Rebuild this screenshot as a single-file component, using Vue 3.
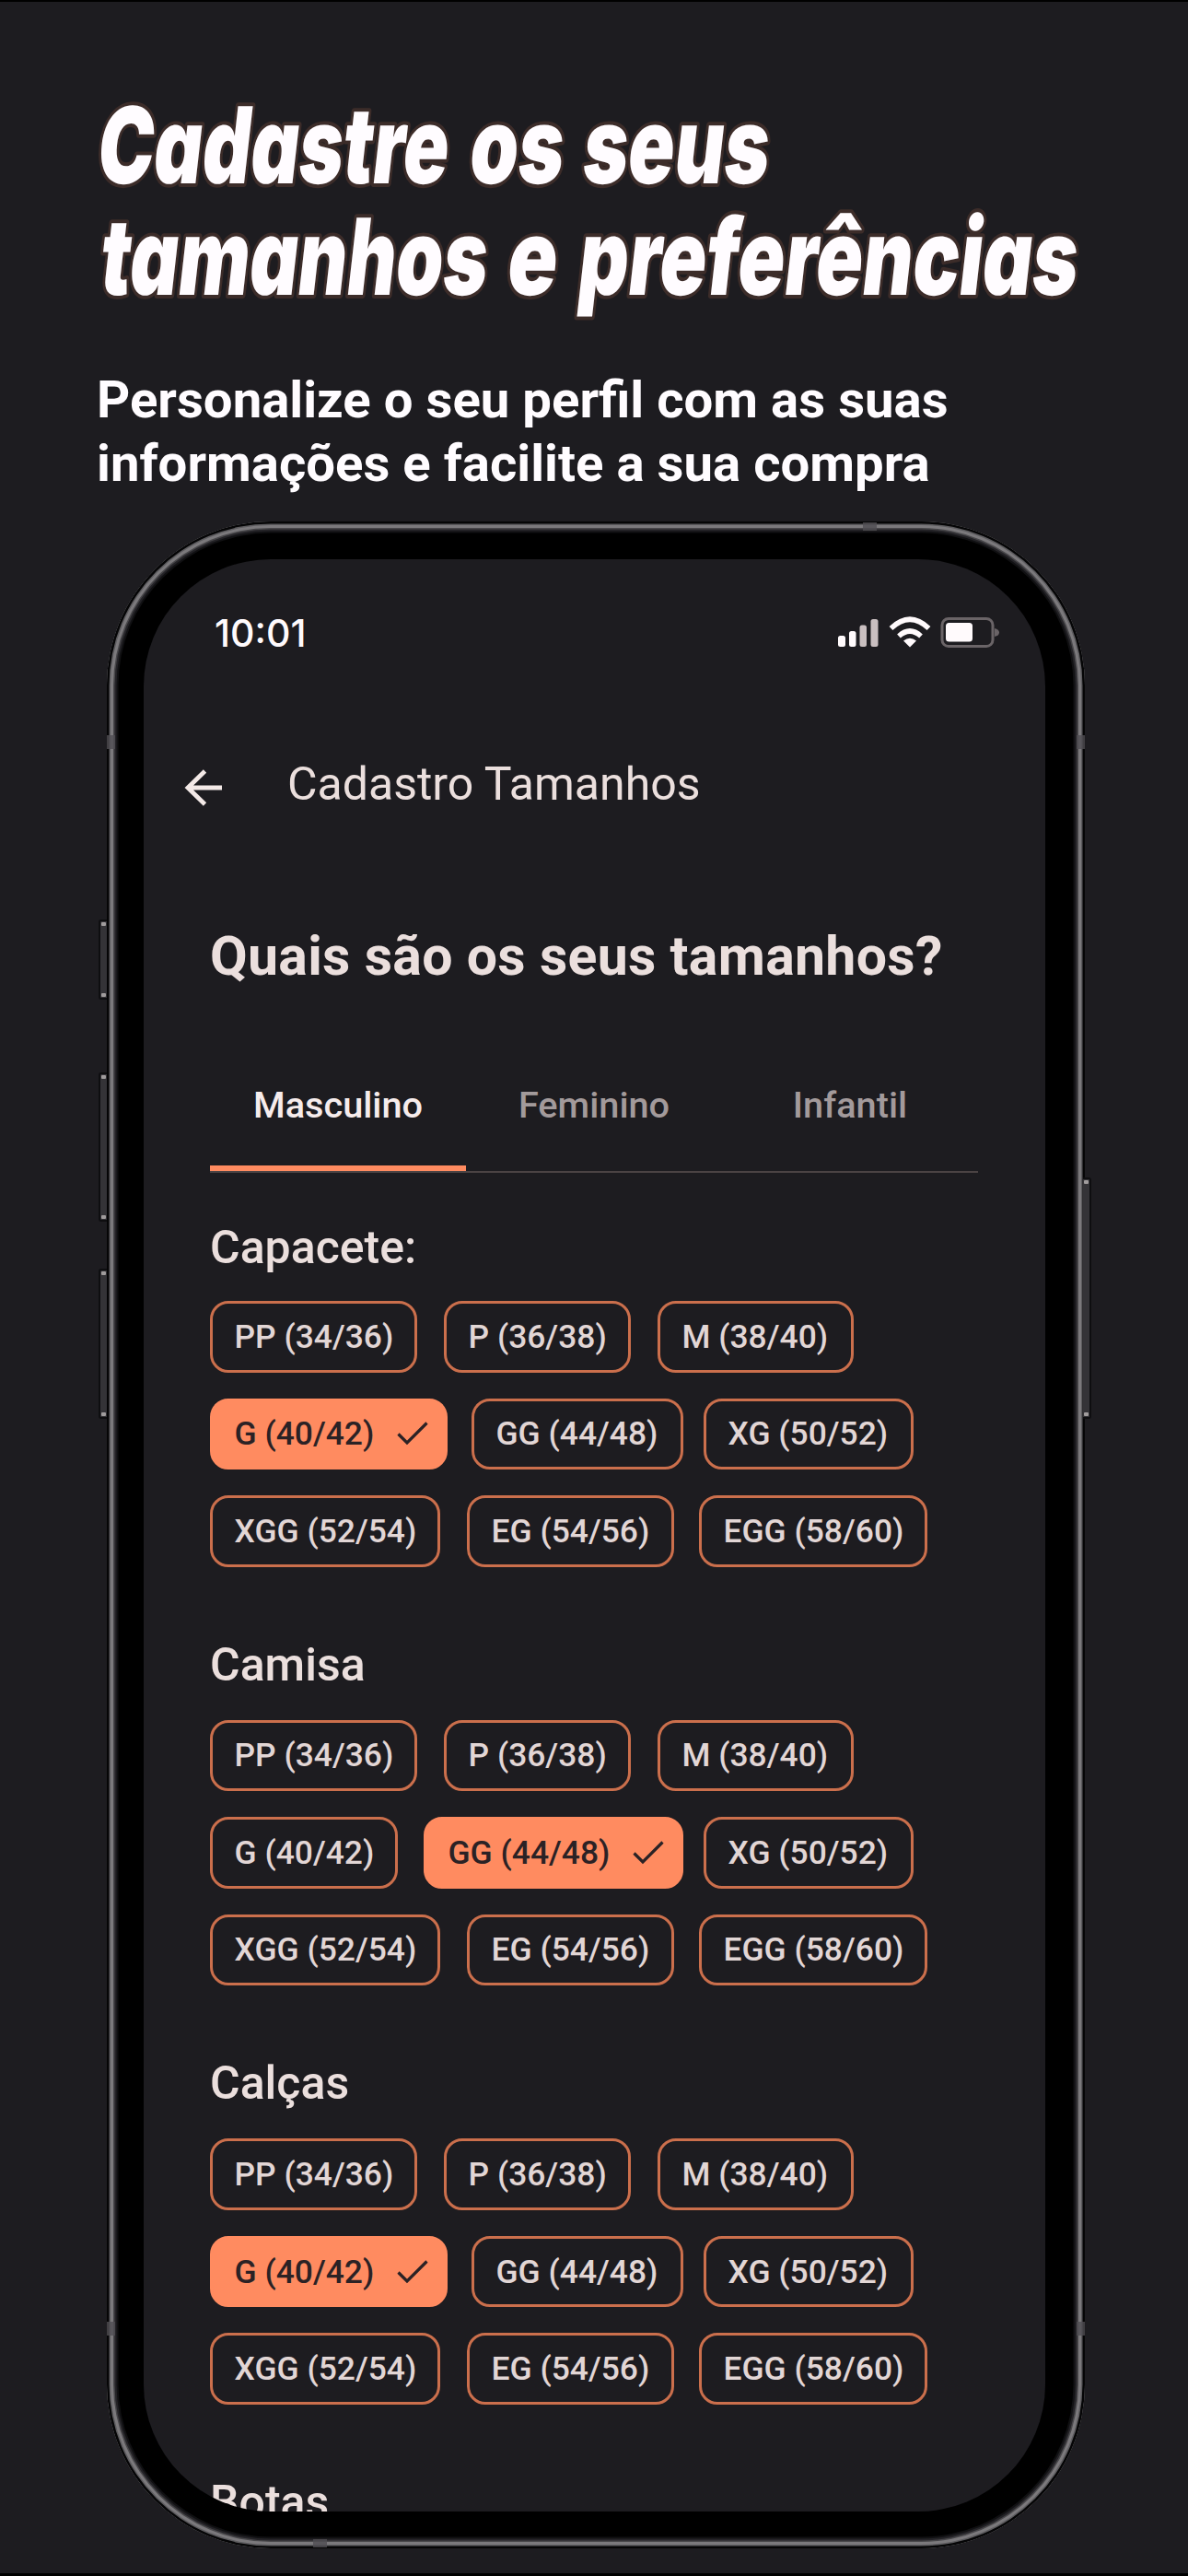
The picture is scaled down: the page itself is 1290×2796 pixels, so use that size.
<template>
  <div class="page">
    <svg class="headline" width="1290" height="380" viewBox="0 0 1290 380">
      <text v-for="t in headline" :key="t.text" :x="t.x" :y="t.y" :textLength="t.len" lengthAdjust="spacingAndGlyphs" :transform="skew(t)">{{ t.text }}</text>
    </svg>
    <p class="sub">Personalize o seu perfil com as suas<br>informações e facilite a sua compra</p>

    <div class="phone">
      <i v-for="k in keys" :key="k" class="key" :class="k"></i>
      <i v-for="n in 6" :key="n" class="seam" :class="'seam' + n"></i>
      <div class="screen">
        <div class="status">
          <span class="time">10:01</span>
          <svg class="status-icons" width="178" height="36" viewBox="0 0 178 36">
            <g fill="#fffafc">
              <rect x="1" y="21" width="8" height="12" rx="2.5" />
              <rect x="13" y="16" width="7.5" height="17" rx="2.5" />
            </g>
            <g fill="#c9bfc0">
              <rect x="24.5" y="9.500" width="7.5" height="23.500" rx="2.5" />
              <rect x="36.5" y="3" width="8" height="30" rx="2.5" />
            </g>
            <g fill="none" stroke="#fffafc" stroke-width="5.500">
              <path d="M58.5 13 Q79 -6.500 99.500 13" />
              <path d="M67 21.500 Q79 10.500 91 21.500" />
            </g>
            <path d="M72 26.500 Q79 21 86 26.500 L79 33.500Z" fill="#fffafc" />
            <rect x="114" y="2.500" width="55" height="30" rx="7" fill="none" stroke="#6a6467" stroke-width="3" />
            <path d="M171 13 Q176 14 176 17.500 Q176 21 171 22Z" fill="#6a6467" />
            <rect x="118" y="7" width="29" height="20.500" rx="3.500" fill="#fffafc" />
          </svg>
        </div>

        <div class="appbar">
          <svg width="44" height="44" viewBox="0 0 44 44" fill="none" stroke="#f3e9e7" stroke-width="4.800">
            <path d="M42 22H5M23.500 4 5 22l18.500 18" />
          </svg>
          <span>Cadastro Tamanhos</span>
        </div>

        <h1>Quais são os seus tamanhos?</h1>

        <div class="tabs">
          <button v-for="(t, i) in tabs" :key="t" :class="{ active: i === tab }" @click="tab = i">{{ t }}</button>
        </div>

        <section v-for="g in groups" :key="g.title">
          <h2>{{ g.title }}</h2>
          <div v-for="(row, r) in rows" :key="r" class="row">
            <button
              v-for="s in row"
              :key="s.label"
              class="chip"
              :class="{ on: g.selected === s.label }"
              :style="chipStyle(s, row, g.selected)"
              @click="g.selected = s.label"
            >
              {{ s.label }}
              <svg v-if="g.selected === s.label" width="34" height="26" viewBox="0 0 34 26" fill="none" stroke="#2b2225" stroke-width="3.200">
                <path d="M1.500 13.500 11 23 32.500 1.500" />
              </svg>
            </button>
          </div>
        </section>
        <h2>Botas</h2>
      </div>
    </div>
  </div>
</template>

<script setup>
import { ref, reactive } from 'vue'

const headline = [
  { text: 'Cadastre', x: 103, y: 199, len: 381 },
  { text: 'os', x: 507, y: 199, len: 102 },
  { text: 'seus', x: 630, y: 199, len: 202 },
  { text: 'tamanhos', x: 106, y: 320, len: 420 },
  { text: 'e', x: 548, y: 320, len: 54 },
  { text: 'preferências', x: 625, y: 320, len: 542 },
]
// lean the upright letters around their own baseline
const skew = t => `translate(${t.y * Math.tan(6.5 * Math.PI / 180)} 0) skewX(-6.5)`

const keys = ['mute', 'up', 'down', 'power']

const tabs = ['Masculino', 'Feminino', 'Infantil']
const tab = ref(0)

// x / end: edges of a chip inside its row, xOn / endOn: the same once it is selected
const rows = [
  [{ label: 'PP (34/36)', x: 0, end: 225 }, { label: 'P (36/38)', x: 254, end: 457 }, { label: 'M (38/40)', x: 486, end: 699 }],
  [{ label: 'G (40/42)', x: 0, end: 204, endOn: 258 }, { label: 'GG (44/48)', x: 284, xOn: 232, end: 514 }, { label: 'XG (50/52)', x: 536, end: 764 }],
  [{ label: 'XGG (52/54)', x: 0, end: 250 }, { label: 'EG (54/56)', x: 279, end: 504 }, { label: 'EGG (58/60)', x: 531, end: 779 }],
]
const edges = (s, on) => ({
  from: on && s.xOn !== undefined ? s.xOn : s.x,
  to: on && s.endOn ? s.endOn : s.end,
})
function chipStyle(s, row, selected) {
  const i = row.indexOf(s)
  const e = edges(s, s.label === selected)
  const prev = i ? edges(row[i - 1], row[i - 1].label === selected).to : 0
  return { width: e.to - e.from + 'px', marginLeft: e.from - prev + 'px' }
}

const groups = reactive([
  { title: 'Capacete:', selected: 'G (40/42)' },
  { title: 'Camisa', selected: 'GG (44/48)' },
  { title: 'Calças', selected: 'G (40/42)' },
])
</script>

<style>
html, body { margin: 0; background: #1d1c20; }
</style>

<style scoped>
* { box-sizing: border-box; }
.page { width: 1290px; height: 2796px; overflow: hidden; background: #1d1c20; border-top: 2px solid #000; border-bottom: 3px solid #000; font-family: Roboto, sans-serif; }
.headline { display: block; margin-top: -2px; overflow: visible; }
.headline text { font: 900 115px Inter, sans-serif; font-feature-settings: 'cv11' 1; fill: #fffcff; stroke: #3c2c29; stroke-width: 8px; stroke-linejoin: round; paint-order: stroke; }
.sub { margin: 20px 0 0 105px; height: 166px; font-size: 56.300px; font-weight: 700; line-height: 68.700px; color: #fffcff; white-space: nowrap; }

.phone { position: relative; width: 1062px; height: 2200px; margin-left: 116px; padding: 41px 43px 40px 40px; border-radius: 178px; background: #000; box-shadow: inset 0 0 0 2.500px #050506, inset 0 0 0 4px #5c5b5e, inset 0 0 0 7px #7b797c, inset 0 0 0 8.500px #48474a, inset 0 0 0 10.500px #242327, inset 0 0 0 12.500px #101012; }
.key { position: absolute; left: -9px; width: 9px; background: #343337; border: 2px solid #0e0e10; border-right: 0; border-radius: 3px 0 0 3px; }
.key::before, .key::after { content: ''; position: absolute; left: 1px; width: 5px; height: 4px; border-radius: 1px; background: #a09c9d; }
.key::before { top: 1px; }
.key::after { bottom: 1px; }
.mute { top: 432px; height: 87px; }
.up { top: 598px; height: 162px; }
.down { top: 811px; height: 163px; }
.power { left: auto; right: -7px; top: 712px; height: 262px; transform: scaleX(-1); }
.seam { position: absolute; width: 9px; height: 15px; background: #504e52; opacity: .8; }
.seam1 { left: 0; top: 232px; }
.seam2 { right: 0; top: 232px; }
.seam3 { left: 0; top: 1954px; }
.seam4 { right: 0; top: 1954px; }
.seam5 { left: 821px; top: 1px; width: 15px; height: 9px; }
.seam6 { left: 224px; bottom: 1px; width: 15px; height: 9px; }

.screen { width: 979px; height: 2119px; overflow: hidden; border-radius: 138px; background: #1d1c20; padding-left: 72px; color: #ebdfdd; }
.status { display: flex; justify-content: space-between; align-items: center; height: 36px; margin-top: 62px; padding: 0 48px 0 5px; }
.time { font: 500 41px Inter, sans-serif; color: #fffafc; }
.status-icons { display: block; }
.appbar { display: flex; align-items: center; gap: 69px; height: 60px; margin: 120px 0 0 -29px; font-size: 50px; }
.appbar span { position: relative; top: -4px; }
h1 { margin: 118px 0 0; height: 70px; line-height: 70px; font-size: 59px; font-weight: 700; letter-spacing: .300px; white-space: nowrap; }
.tabs { display: flex; width: 834px; height: 131px; margin-top: 69px; border-bottom: 2px solid #4b4344; }
.tabs button { position: relative; flex: 1; padding: 0 0 14px; border: 0; background: none; font: 500 39.700px Roboto, sans-serif; color: #a39a9b; }
.tabs button.active { color: #f6ecec; }
.tabs button.active::after { content: ''; position: absolute; left: 0; right: 0; bottom: 0; height: 6px; background: #ff8b60; }

section { height: 454.700px; }
h2 { margin: 0; padding-top: 50px; height: 139px; line-height: 58px; font-size: 50px; font-weight: 500; }
.tabs + section h2 { padding-top: 52px; }
.row { display: flex; height: 105.500px; }
.chip { display: flex; justify-content: space-between; align-items: center; flex: none; height: 77.500px; padding: 0 18px 0 23.500px; border: 3px solid #cb6f4c; border-radius: 20px; background: none; font: 500 35.400px Roboto, sans-serif; color: #e2d6d5; white-space: nowrap; }
.chip.on { background: #ff8b60; border-color: #ff8b60; color: #2b2225; }
</style>
